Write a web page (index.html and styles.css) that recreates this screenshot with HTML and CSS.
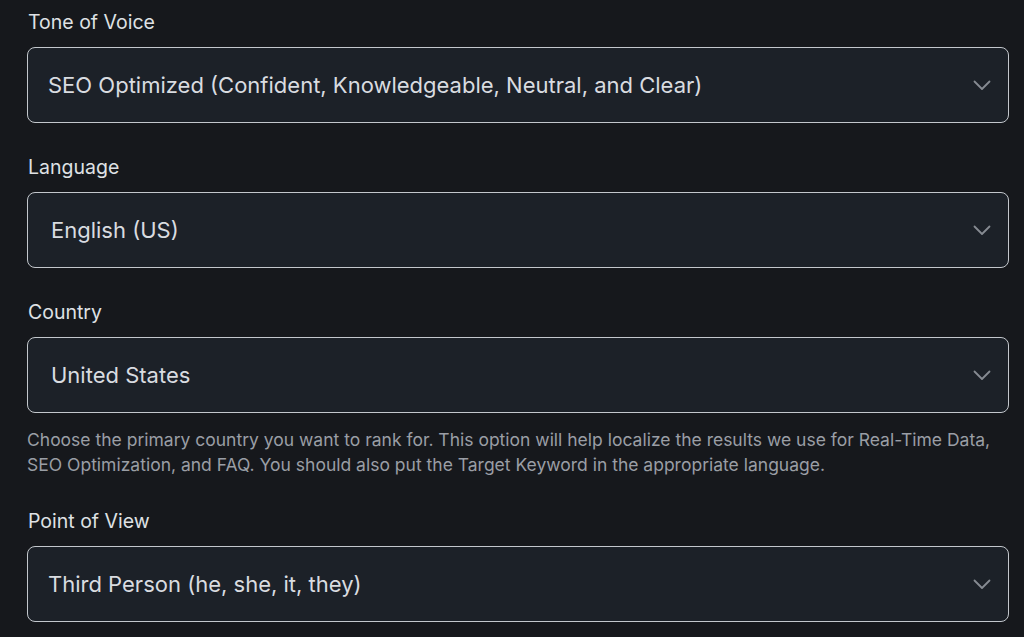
FILE: index.html
```html
<!DOCTYPE html>
<html lang="en">
<head>
  <meta charset="UTF-8">
  <meta name="viewport" content="width=device-width, initial-scale=1.0">
  <title>Article Settings</title>
  <link rel="stylesheet" href="styles.css">
</head>
<body>

  <main class="settings">
    <div class="field">
      <div class="field-label">Tone of Voice</div>
      <div class="select">
        <span class="select-value">SEO Optimized (Confident, Knowledgeable, Neutral, and Clear)</span>
        <svg class="chevron" width="18" height="18" viewBox="0 0 18 18"><path d="M1.5 5.5l7.5 7.5 7.5-7.5" fill="none" stroke="currentColor" stroke-width="1.8" stroke-linecap="round" stroke-linejoin="round"/></svg>
      </div>
    </div>

    <div class="field">
      <div class="field-label">Language</div>
      <div class="select">
        <span class="select-value indent">English (US)</span>
        <svg class="chevron" width="18" height="18" viewBox="0 0 18 18"><path d="M1.5 5.5l7.5 7.5 7.5-7.5" fill="none" stroke="currentColor" stroke-width="1.8" stroke-linecap="round" stroke-linejoin="round"/></svg>
      </div>
    </div>

    <div class="field">
      <div class="field-label">Country</div>
      <div class="select">
        <span class="select-value indent">United States</span>
        <svg class="chevron" width="18" height="18" viewBox="0 0 18 18"><path d="M1.5 5.5l7.5 7.5 7.5-7.5" fill="none" stroke="currentColor" stroke-width="1.8" stroke-linecap="round" stroke-linejoin="round"/></svg>
      </div>
      <p class="help">Choose the primary country you want to rank for. This option will help localize the results we use for Real-Time Data, SEO Optimization, and FAQ. You should also put the Target Keyword in the appropriate language.</p>
    </div>

    <div class="field">
      <div class="field-label">Point of View</div>
      <div class="select">
        <span class="select-value">Third Person (he, she, it, they)</span>
        <svg class="chevron" width="18" height="18" viewBox="0 0 18 18"><path d="M1.5 5.5l7.5 7.5 7.5-7.5" fill="none" stroke="currentColor" stroke-width="1.8" stroke-linecap="round" stroke-linejoin="round"/></svg>
      </div>
    </div>
  </main>

</body>
</html>
```

FILE: styles.css
```css
body {
  font-family: Inter, 'Noto Sans', sans-serif;
  background-color: #16181c;
  color: #e1e3e6;
  margin: 0;
  padding: 0;
}

.settings {
  padding: 10px 15px 0 27px;
}

.field {
  margin-bottom: 32px;
}

.field-label {
  font-size: 19.5px;
  line-height: 24px;
  font-weight: 400;
  color: #dfe1e4;
  margin-bottom: 13px;
  padding-left: 1px;
}

.select {
  display: flex;
  align-items: center;
  justify-content: space-between;
  height: 76px;
  box-sizing: border-box;
  padding: 0 17px 0 20px;
  background-color: #1c2128;
  border: 1.5px solid #c3c7cc;
  border-radius: 8px;
}

.select-value {
  font-size: 22px;
  color: #d9dce0;
}

.select-value.indent {
  padding-left: 3px;
}

.chevron {
  color: #868b92;
}

.help {
  margin: 14px 0 -0.5px;
  font-size: 17.5px;
  line-height: 25px;
  color: #9a9ea5;
}
```
